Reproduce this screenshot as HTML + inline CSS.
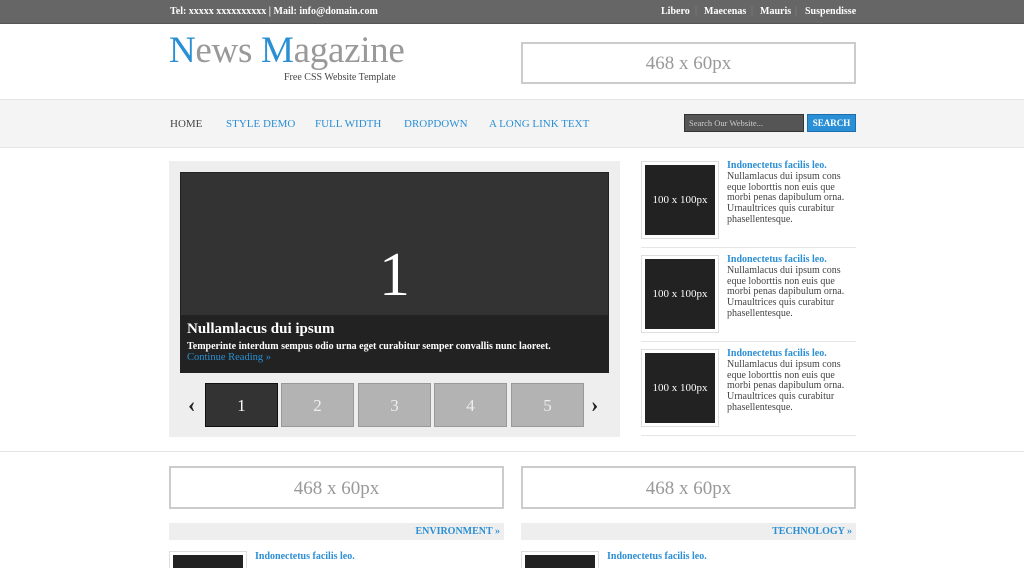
<!DOCTYPE html>
<html><head><style>
*{margin:0;padding:0;box-sizing:border-box}
html,body{width:1024px;height:568px;overflow:hidden}
body{background:#fff;font-family:"Liberation Serif",serif;position:relative}
.a{position:absolute}
.top{left:0;top:0;width:1024px;height:24px;background:#666;border-bottom:1px solid #555;color:#fff;font-size:10px;font-weight:bold}
.blue{color:#2a8fd4}
.ad{border:2px solid #ccc;color:#999;font-size:19px;text-align:center;background:#fff}
.nav a{position:absolute;top:118px;font-size:11px;color:#2a8fd4;text-decoration:none}
.thumb{width:73px;height:44px;background:#b3b3b3;border:1px solid #999;color:#eee;font-size:17px;text-align:center;line-height:44px}
.si{left:641px;width:215px;height:87px;border-bottom:1px solid #e5e5e5}
.sib{position:absolute;left:0;top:0;width:78px;height:78px;border:1px solid #ddd;padding:3px;background:#fff}
.sib div{width:70px;height:70px;background:#222;color:#fff;font-size:11px;text-align:center;line-height:70px}
.sit{position:absolute;left:86px;top:0;font-size:10px;line-height:10.8px;color:#444;width:128px}
.sit b{color:#2a8fd4;font-size:10px}
.cat{height:17px;background:#eee;color:#2a8fd4;font-size:10px;font-weight:bold;text-align:right;padding-right:4px;line-height:17px}
</style></head><body>
<div class="a top">
<span class="a" style="left:170px;top:6px">Tel: xxxxx xxxxxxxxxx | Mail: info@domain.com</span>
<span class="a" style="left:661px;top:6px">Libero</span>
<span class="a" style="left:695px;top:5px;color:#888;font-weight:normal">|</span>
<span class="a" style="left:704px;top:6px">Maecenas</span>
<span class="a" style="left:751px;top:5px;color:#888;font-weight:normal">|</span>
<span class="a" style="left:760px;top:6px">Mauris</span>
<span class="a" style="left:795px;top:5px;color:#888;font-weight:normal">|</span>
<span class="a" style="left:805px;top:6px">Suspendisse</span>
</div>
<div class="a" style="left:169px;top:29px;font-size:37px;color:#999;letter-spacing:-0.3px"><span class="blue">N</span>ews <span class="blue">M</span>agazine</div>
<div class="a" style="left:284px;top:72px;font-size:10px;color:#444">Free CSS Website Template</div>
<div class="a ad" style="left:521px;top:42px;width:335px;height:42px;line-height:40px">468 x 60px</div>
<div class="a" style="left:0;top:99px;width:1024px;height:49px;background:#f4f4f4;border-top:1px solid #e6e6e6;border-bottom:1px solid #e6e6e6"></div>
<div class="nav">
<a style="left:170px;color:#444">HOME</a>
<a style="left:226px">STYLE DEMO</a>
<a style="left:315px">FULL WIDTH</a>
<a style="left:404px">DROPDOWN</a>
<a style="left:489px">A LONG LINK TEXT</a>
</div>
<div class="a" style="left:684px;top:114px;width:120px;height:18px;background:#555;border:1px solid #333;color:#ccc;font-size:8.5px;line-height:16px;padding-left:4px">Search Our Website...</div>
<div class="a" style="left:807px;top:114px;width:49px;height:18px;background:#2a8fd4;border:1px solid #1b6fae;color:#fff;font-size:9px;font-weight:bold;text-align:center;line-height:16px">SEARCH</div>

<div class="a" style="left:169px;top:161px;width:451px;height:276px;background:#eee"></div>
<div class="a" style="left:180px;top:172px;width:429px;height:201px;background:#333;border:1px solid #222"></div>
<div class="a" style="left:180px;top:244px;width:429px;text-align:center;color:#fff;font-size:62px;line-height:62px">1</div>
<div class="a" style="left:181px;top:315px;width:427px;height:57px;background:#222"></div>
<div class="a" style="left:187px;top:321px;color:#fff;font-size:15px;font-weight:bold">Nullamlacus dui ipsum</div>
<div class="a" style="left:187px;top:341px;color:#fff;font-size:10px;font-weight:bold">Temperinte interdum sempus odio urna eget curabitur semper convallis nunc laoreet.</div>
<div class="a" style="left:187px;top:352px;color:#2a8fd4;font-size:10.5px">Continue Reading »</div>
<div class="a" style="left:188px;top:392px;font-size:22px;color:#222;font-weight:bold">‹</div>
<div class="a thumb" style="left:205px;top:383px;background:#333;border-color:#111;color:#fff">1</div>
<div class="a thumb" style="left:281px;top:383px">2</div>
<div class="a thumb" style="left:358px;top:383px">3</div>
<div class="a thumb" style="left:434px;top:383px">4</div>
<div class="a thumb" style="left:511px;top:383px">5</div>
<div class="a" style="left:591px;top:392px;font-size:22px;color:#222;font-weight:bold">›</div>

<div class="a si" style="top:161px"><div class="sib"><div>100 x 100px</div></div><div class="sit"><b>Indonectetus facilis leo.</b><br>Nullamlacus dui ipsum cons eque loborttis non euis que morbi penas dapibulum orna. Urnaultrices quis curabitur phasellentesque.</div></div>
<div class="a si" style="top:255px"><div class="sib"><div>100 x 100px</div></div><div class="sit"><b>Indonectetus facilis leo.</b><br>Nullamlacus dui ipsum cons eque loborttis non euis que morbi penas dapibulum orna. Urnaultrices quis curabitur phasellentesque.</div></div>
<div class="a si" style="top:349px"><div class="sib"><div>100 x 100px</div></div><div class="sit"><b>Indonectetus facilis leo.</b><br>Nullamlacus dui ipsum cons eque loborttis non euis que morbi penas dapibulum orna. Urnaultrices quis curabitur phasellentesque.</div></div>

<div class="a" style="left:0;top:451px;width:1024px;height:1px;background:#e3e3e3"></div>
<div class="a ad" style="left:169px;top:466px;width:335px;height:43px;line-height:41px">468 x 60px</div>
<div class="a ad" style="left:521px;top:466px;width:335px;height:43px;line-height:41px">468 x 60px</div>
<div class="a cat" style="left:169px;top:523px;width:335px">ENVIRONMENT »</div>
<div class="a cat" style="left:521px;top:523px;width:335px">TECHNOLOGY »</div>
<div class="a" style="left:169px;top:551px;width:78px;height:30px;border:1px solid #ddd;padding:3px"><div style="background:#222;height:30px"></div></div>
<div class="a" style="left:255px;top:551px;font-size:10px;font-weight:bold;color:#2a8fd4">Indonectetus facilis leo.</div>
<div class="a" style="left:521px;top:551px;width:78px;height:30px;border:1px solid #ddd;padding:3px"><div style="background:#222;height:30px"></div></div>
<div class="a" style="left:607px;top:551px;font-size:10px;font-weight:bold;color:#2a8fd4">Indonectetus facilis leo.</div>
</body></html>
